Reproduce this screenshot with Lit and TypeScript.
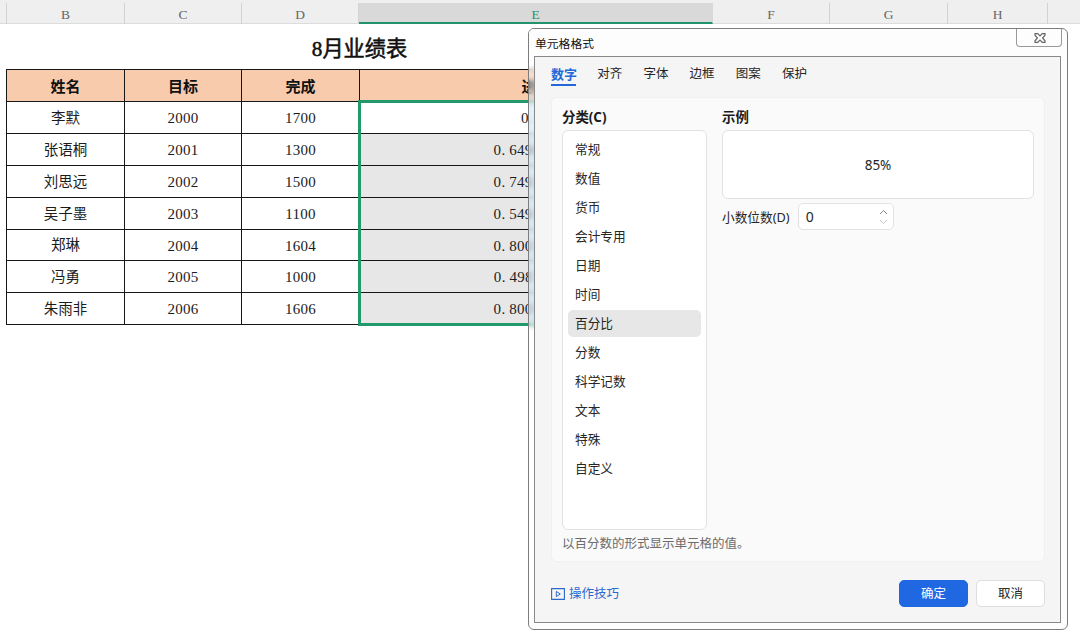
import { LitElement, html, css } from "lit";
import { customElement, property, state } from "lit/decorators.js";
import { classMap } from "lit/directives/class-map.js";

const rows = [
  ["李默", "2000", "1700", "0.85"],
  ["张语桐", "2001", "1300", "0.649675162"],
  ["刘思远", "2002", "1500", "0.749250749"],
  ["吴子墨", "2003", "1100", "0.549176236"],
  ["郑琳", "2004", "1604", "0.800399202"],
  ["冯勇", "2005", "1000", "0.498753117"],
  ["朱雨非", "2006", "1606", "0.800598205"],
];

@customElement("sheet-grid")
export class SheetGrid extends LitElement {
  static styles = css`
    :host { display: block; position: relative; font-family: "Liberation Serif", "Noto Sans CJK SC", serif; color: #111; }
    .cols { display: grid; grid-template-columns: 7px 118px 117px 117px 354px 117px 118px 100px 1fr; height: 24px; box-sizing: border-box; padding-top: 3px; background: #efefef; border-bottom: 1px solid #dcdcdc; }
    .col { display: flex; align-items: center; justify-content: center; border-right: 1px solid #d2d2d2; font-size: 13.5px; color: #666; padding-top: 3px; }
    .col:last-child { border-right: 0; }
    .active { background: #d9d9d9; color: #21936a; border-right-color: #d9d9d9; border-bottom: 2px solid #21936a; height: 16px; padding-top: 4px; height: 15px; }
    .title { width: 707px; margin-left: 6px; height: 45px; display: flex; align-items: center; justify-content: center; font-size: 21.2px; -webkit-text-stroke: 0.55px #111; box-sizing: border-box; padding-bottom: 1px; }
    .table { display: grid; grid-template-columns: 117px 116px 117px 353px; grid-template-rows: repeat(5, 31px) 30px 31px 31px; gap: 1px; width: 706px; margin-left: 6px; padding: 1px; background: #161616; }
    .cell { display: flex; align-items: center; justify-content: center; background: #fff; font-size: 15px; letter-spacing: 0.3px; padding-top: 2px; box-sizing: border-box; color: #1c1c1c; }
    .name { font-size: 14.5px; letter-spacing: 0; padding: 0 0 3px; }
    .head { background: #f8cbad; color: #111; font-weight: 700; letter-spacing: 0; padding: 0 0 1px; }
    .sel { background: #e7e7e7; }
    .dot { display: inline-block; width: 7.8px; }
    .range { position: absolute; left: 358px; top: 100px; width: 356px; height: 226px; box-sizing: border-box; border: 3px solid #21996b; }
  `;
  num(v: string) {
    const [a, b] = v.split(".");
    return b ? html`<span>${a}<span class="dot">.</span>${b}</span>` : v;
  }
  render() {
    return html`
      <div class="cols">
        ${["", "B", "C", "D", "E", "F", "G", "H", ""].map(
          (c) => html`<div class=${classMap({ col: true, active: c === "E" })}>${c}</div>`
        )}
      </div>
      <div class="title">8月业绩表</div>
      <div class="table">
        ${["姓名", "目标", "完成", "进度"].map((h) => html`<div class="cell head">${h}</div>`)}
        ${rows.map((r, i) =>
          r.map(
            (v, j) => html`<div class=${classMap({ cell: true, name: j === 0, sel: j === 3 && i > 0 })}>${this.num(v)}</div>`
          )
        )}
      </div>
      <div class="range"></div>
    `;
  }
}

@customElement("format-dialog")
export class FormatDialog extends LitElement {
  @property() heading = "单元格格式";
  @state() tab = "数字";
  @state() category = "百分比";
  static styles = css`
    :host { display: flex; flex-direction: column; box-sizing: border-box; border: 1px solid #7d7d7d; border-radius: 6px; padding: 0 6px 6px 5px; background: linear-gradient(rgba(255,255,255,0) 70px, rgba(180,220,242,.4) 76px, rgba(180,220,242,.4) 292px, rgba(255,255,255,0) 300px) 0 0 / 5px 100% no-repeat, linear-gradient(90deg, rgba(255,255,255,.4) 5px, #fdfdfd 6px); backdrop-filter: blur(2.5px); font: 12.5px/18px "Noto Sans", "Noto Sans CJK SC", sans-serif; color: #262626; }
    .bar { display: flex; justify-content: space-between; height: 27px; margin-left: -5px; padding-left: 6px; background: #fdfdfd; border-radius: 5px 0 0 0; }
    .name { font-size: 11.8px; padding-top: 5px; color: #111; }
    .close { width: 44px; height: 18px; border: 1px solid #999; border-top: 0; border-radius: 0 0 4px 4px; display: flex; align-items: center; justify-content: center; margin-right: -1px; padding-left: 1px; box-sizing: border-box; width: 46px; }
    .body { flex: 1; display: flex; flex-direction: column; border: 1px solid #898989; background: #f5f5f5; padding: 0 15px 15px 16px; }
    .tabs { display: flex; gap: 21px; height: 40px; padding-top: 8px; box-sizing: border-box; }
    .tab { height: 21px; box-sizing: border-box; width: 25.2px; white-space: nowrap; border-bottom: 2px solid transparent; }
    .on { color: #2468d8; font-weight: 700; border-color: #2468d8; font-size: 13px; }
    .panel { height: 465px; box-sizing: border-box; background: #fafafa; border: 1px solid #f0f0f0; border-radius: 6px; padding: 11px 10px 0 10px; display: grid; grid-template-columns: 145px 312px; gap: 15px; }
    .label { font-weight: 700; height: 21px; line-height: 17px; color: #1b1b1b; font-size: 13.4px; }
    .list { height: 400px; box-sizing: border-box; background: #fff; border: 1px solid #e2e2e2; border-radius: 6px; padding: 5px; }
    .item { height: 27px; line-height: 27px; margin-bottom: 2px; padding-left: 7px; border-radius: 5px; font-size: 12.7px; }
    .picked { background: #e7e7e7; }
    .hint { color: #6c6c6c; margin-top: 5px; white-space: nowrap; }
    .sample { height: 69px; box-sizing: border-box; background: #fff; border: 1px solid #e2e2e2; border-radius: 6px; display: flex; align-items: center; justify-content: center; font-size: 13.5px; }
    .digits { display: flex; align-items: center; margin-top: 4px; gap: 8px; white-space: nowrap; font-size: 12.7px; }
    .spin { width: 96px; height: 27px; box-sizing: border-box; border: 1px solid #e2e2e2; border-radius: 5px; background: #fff; display: flex; align-items: center; justify-content: space-between; padding: 0 5px 0 7px; font-size: 14px; }
    .foot { display: flex; align-items: center; gap: 8px; margin: 17px 0 0; height: 28px; }
    .tips { color: #2c68cf; display: flex; align-items: center; gap: 4px; margin-right: auto; padding-top: 1px; }
    .btn { width: 69px; height: 27px; box-sizing: border-box; border-radius: 5px; display: flex; align-items: center; justify-content: center; background: #fff; border: 1px solid #dedede; padding-top: 1px; }
    .primary { background: #1f68e1; border-color: #1f68e1; color: #fff; }
    svg { display: block; fill: none; }
  `;
  render() {
    const cats = ["常规", "数值", "货币", "会计专用", "日期", "时间", "百分比", "分数", "科学记数", "文本", "特殊", "自定义"];
    return html`
      <div class="bar">
        <span class="name">${this.heading}</span>
        <div class="close">
          <svg width="12" height="10" viewBox="0 0 12 10"><path d="M1 .7h2.7L6 3 8.3.7H11v1.5L8.6 5 11 7.8v1.5H8.3L6 7 3.7 9.3H1V7.8L3.4 5 1 2.2z" fill="#fff" stroke="#666" stroke-width="1.2" /></svg>
        </div>
      </div>
      <div class="body">
        <div class="tabs">
          ${["数字", "对齐", "字体", "边框", "图案", "保护"].map(
            (t) => html`<div class=${classMap({ tab: true, on: t === this.tab })} @click=${() => (this.tab = t)}>${t}</div>`
          )}
        </div>
        <div class="panel">
          <div>
            <div class="label">分类(C)</div>
            <div class="list">
              ${cats.map(
                (c) => html`<div class=${classMap({ item: true, picked: c === this.category })} @click=${() => (this.category = c)}>${c}</div>`
              )}
            </div>
            <div class="hint">以百分数的形式显示单元格的值。</div>
          </div>
          <div>
            <div class="label">示例</div>
            <div class="sample">85%</div>
            <div class="digits">
              <span>小数位数(D)</span>
              <div class="spin">
                <span>0</span>
                <svg width="9" height="16" viewBox="0 0 9 16"><path d="M1 5l3.5-3.5L8 5" stroke="#888" /><path d="M1 11l3.5 3.5L8 11" stroke="#c8c8c8" /></svg>
              </div>
            </div>
          </div>
        </div>
        <div class="foot">
          <div class="tips">
            <svg width="14" height="12" viewBox="0 0 14 12"><path d="M.6.6h12.8v10.8H.6z" stroke="#2c68cf" stroke-width="1.1" /><path d="M5.3 3.4v5.2L9.3 6z" stroke="#2c68cf" /></svg>
            <span>操作技巧</span>
          </div>
          <div class="btn primary">确定</div>
          <div class="btn">取消</div>
        </div>
      </div>
    `;
  }
}

@customElement("app-root")
export class AppRoot extends LitElement {
  static styles = css`
    :host { display: block; position: relative; width: 1080px; height: 634px; overflow: hidden; background: #fff; }
    .dialog { position: absolute; left: 528px; top: 28px; width: 540px; height: 602px; }
  `;
  render() {
    return html`<sheet-grid></sheet-grid><format-dialog class="dialog"></format-dialog>`;
  }
}
